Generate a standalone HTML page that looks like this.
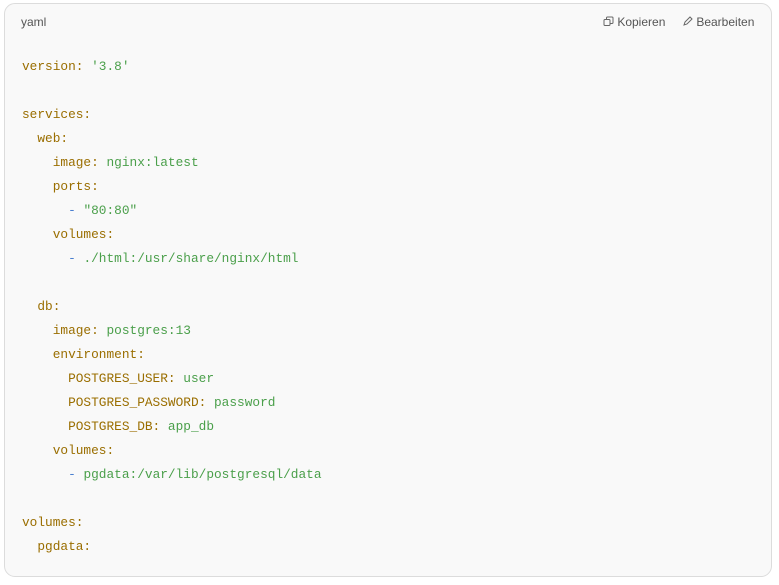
<!DOCTYPE html>
<html><head><style>
body{margin:0;background:#fff;width:779px;height:585px;overflow:hidden}
.box{position:absolute;left:4px;top:3px;width:766px;height:572px;border:1px solid #dcdcdc;border-radius:11px;background:#f9f9f9}
.lang{position:absolute;left:16px;top:11px;font:12px "Liberation Sans",sans-serif;color:#555}
.act{position:absolute;top:11px;font:12px "Liberation Sans",sans-serif;color:#555}
pre{position:absolute;left:17px;top:51px;margin:0;font:12.8px/24px "Liberation Mono",monospace;color:#9a6e00}
.v{color:#4a9f4a}
.d{color:#4a7fd0}
</style></head><body>
<div class="box">
<div class="lang">yaml</div>
<div class="act" style="left:598px"><svg width="11" height="11" viewBox="0 0 11 11" style="vertical-align:-1px"><rect x="1" y="3.5" width="6" height="6" rx="1" fill="none" stroke="#666"/><path d="M3.5 3.5V2a1 1 0 0 1 1-1h4.5a1 1 0 0 1 1 1v4.5a1 1 0 0 1-1 1H7" fill="none" stroke="#666"/></svg> Kopieren</div>
<div class="act" style="left:677px"><svg width="11" height="11" viewBox="0 0 11 11" style="vertical-align:-1px"><path d="M2 9l1-3 5-5 2 2-5 5z" fill="none" stroke="#666"/></svg> Bearbeiten</div>
<pre>version: <span class="v">'3.8'</span>

services:
  web:
    image: <span class="v">nginx:latest</span>
    ports:
      <span class="d">-</span> <span class="v">"80:80"</span>
    volumes:
      <span class="d">-</span> <span class="v">./html:/usr/share/nginx/html</span>

  db:
    image: <span class="v">postgres:13</span>
    environment:
      POSTGRES_USER: <span class="v">user</span>
      POSTGRES_PASSWORD: <span class="v">password</span>
      POSTGRES_DB: <span class="v">app_db</span>
    volumes:
      <span class="d">-</span> <span class="v">pgdata:/var/lib/postgresql/data</span>

volumes:
  pgdata:</pre>
</div>
</body></html>
